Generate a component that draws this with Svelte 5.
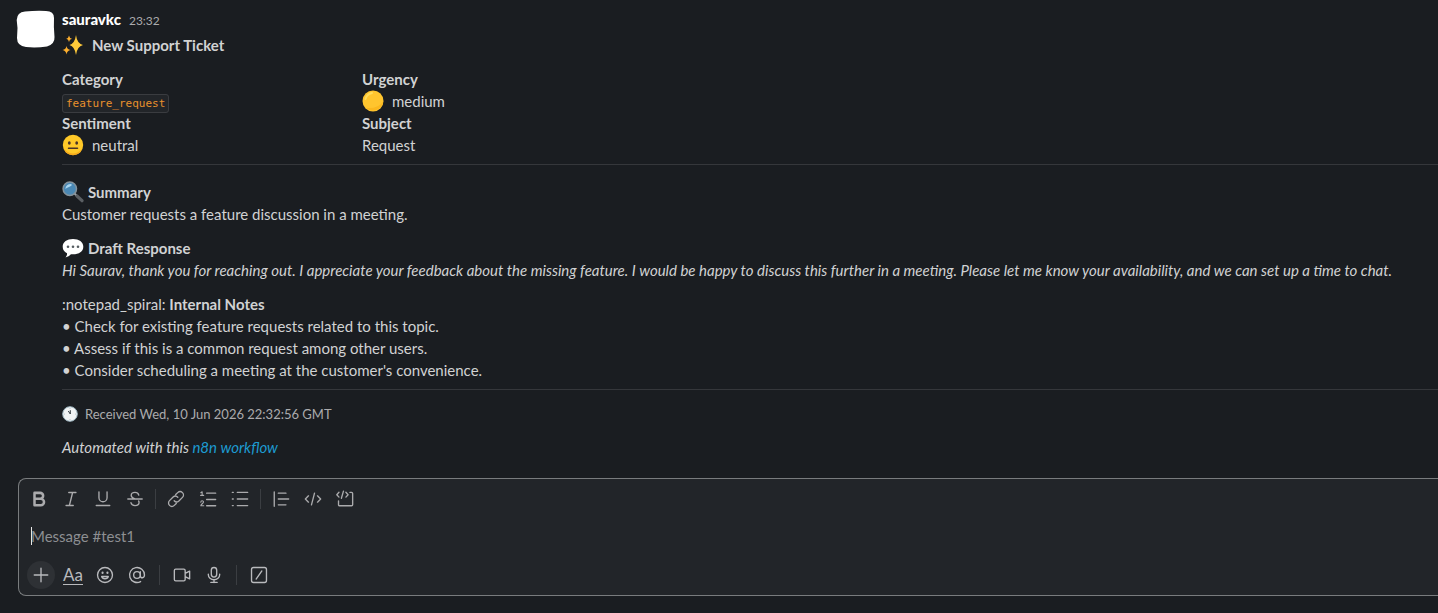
<script lang="ts">
  const notes = [
    'Check for existing feature requests related to this topic.',
    'Assess if this is a common request among other users.',
    "Consider scheduling a meeting at the customer's convenience."
  ];
  const formatGroups = [
    ['Bold', 'Italic', 'Underline', 'Strikethrough'],
    ['Link', 'Ordered list', 'Bulleted list'],
    ['Blockquote', 'Code', 'Code block']
  ];
  const actionGroups = [
    ['Attach', 'Formatting', 'Emoji', 'Mention'],
    ['Video clip', 'Audio clip'],
    ['Shortcuts']
  ];
  let draft = $state('');
</script>

{#snippet icon(name: string)}
  <svg class="icon" viewBox="0 0 20 20" aria-hidden="true">
    {#if name === 'Bold'}
      <path class="heavy" d="M5 3.200h6.300a3.300 3.300 0 0 1 0 6.600H5zM5 9.800h7a3.600 3.600 0 0 1 0 7.200H5z" />
    {:else if name === 'Italic'}
      <path d="M7.500 2.750h8M4.500 17.250h8M11.800 2.750l-3.600 14.500" />
    {:else if name === 'Underline'}
      <path d="M5.500 2v6.500a4.500 4.500 0 0 0 9 0V2M2.500 17.250h15" />
    {:else if name === 'Strikethrough'}
      <path d="M14.200 5.700C13.700 3.800 12.200 2.700 10 2.700c-2.500 0-4.200 1.300-4.200 3.400 0 1.900 1.500 2.900 4.200 3.700M2 10h16M14 12.200c.4.5.5 1 .5 1.600 0 2.200-1.800 3.500-4.500 3.500-2.400 0-4.100-1.200-4.500-3.200" />
    {:else if name === 'Link'}
      <path d="M8 12a3.700 3.700 0 0 0 5.200.2l4-4a3.700 3.700 0 0 0-5.300-5.300L9.700 5.100M12 8a3.700 3.700 0 0 0-5.200-.2l-4 4a3.700 3.700 0 0 0 5.300 5.300l2.200-2.200" />
    {:else if name === 'Ordered list'}
      <path d="M8.500 3.500H18.500M8.500 10.500H18.500M8.500 17.500H18.500" />
      <path class="thin" d="M2 3l1.500-1v4M1.800 6h3.400M2 13.500c0-2 3-2 3-.1 0 1.300-3 2.600-3 4.100h3.300" />
    {:else if name === 'Bulleted list'}
      <path d="M7 2.700h11.500M7 10h11.500M7 17.300h11.500M1.500 2.700h1M1.500 10h1M1.500 17.300h1" />
    {:else if name === 'Blockquote'}
      <path d="M2.500 2v16M7 3.500h8.500M7 10h11.500M7 16.500h8.500" />
    {:else if name === 'Code'}
      <path d="M5 6.500L1.500 10 5 13.500M15 6.500l3.500 3.500-3.500 3.500M11.700 3.500L8.300 16.500" />
    {:else if name === 'Code block'}
      <path d="M3.300 2.500L.9 5.200l2.400 2.700M11 2.500l2.400 2.700L11 7.900M8.300 1.200L6 9.200M15.500 2.700h1.800c.7 0 1.200.5 1.200 1.200v12.400c0 .7-.5 1.200-1.200 1.200H4c-.7 0-1.200-.5-1.200-1.200V12" />
    {:else if name === 'Attach'}
      <path d="M10 2.500v15M2.500 10h15" />
    {:else if name === 'Emoji'}
      <circle cx="10" cy="10" r="8.300" />
      <path d="M6.300 11.700c1 3.300 6.400 3.300 7.400 0z" />
      <ellipse class="solid" cx="7.300" cy="7.500" rx="1.200" ry="1.500" />
      <ellipse class="solid" cx="12.700" cy="7.500" rx="1.200" ry="1.500" />
    {:else if name === 'Mention'}
      <circle cx="10" cy="10" r="3.700" />
      <path d="M13.700 6.300v4.600c0 3.200 4.600 2.800 4.600-.9A8.300 8.300 0 1 0 14 17.300" />
    {:else if name === 'Video clip'}
      <path d="M3 3.500h9c.9 0 1.500.7 1.500 1.500v10c0 .9-.6 1.500-1.500 1.500H3c-.9 0-1.500-.6-1.500-1.500V5c0-.8.6-1.500 1.500-1.500zM13.500 8.300l5-2.600v8.600l-5-2.600" />
    {:else if name === 'Audio clip'}
      <rect x="7" y="1.700" width="6" height="10.600" rx="3" />
      <path d="M3.700 9v.7a6.300 5.600 0 0 0 12.600 0V9M10 15.300v3M6.500 18.200h7" />
    {:else}
      <rect x="1.700" y="1.700" width="16.600" height="16.600" rx="2.200" />
      <path d="M13.200 5.500l-6.400 9" />
    {/if}
  </svg>
{/snippet}

<main>
  <article class="message">
    <div class="avatar">
      <svg viewBox="0 0 40 40" role="img" aria-label="sauravkc">
        <path fill="#fff" d="M9 3.500Q20 2.500 30 3Q38 3 38 10Q37.500 19 38.500 29Q39 36 31 38.500Q20 40 10 39Q1 38 1 30L1.500 20L.7 12Q1 4 9 3.500Z" />
      </svg>
    </div>
    <div class="body">
      <header><b class="author">sauravkc</b><time>23:32</time></header>
      <h1 class="line wide">
        <svg class="emoji" viewBox="0 0 22 22" aria-hidden="true">
          <path fill="#ffca3a" d="M14 1Q15 9.500 21 11Q15 12.500 14 21Q12.800 12.500 7.500 11Q12.800 9.500 14 1Z" />
          <path fill="#ffb02e" d="M4.500 12Q5 15.500 8.500 16Q5 16.500 4.500 20.500Q4 16.500 .5 16Q4 15.500 4.500 12ZM7 1.500Q7.400 4.200 10 4.800Q7.400 5.300 7 8Q6.600 5.300 4.200 4.800Q6.600 4.200 7 1.500Z" />
        </svg>
        New Support Ticket
      </h1>

      <dl class="fields">
        <div><dt>Category</dt><dd><code>feature_request</code></dd></div>
        <div>
          <dt>Urgency</dt>
          <dd class="line wide">
            <svg class="emoji" viewBox="0 0 22 22" aria-hidden="true">
              <circle cx="11" cy="11" r="10.500" fill="#ffc52e" />
              <path d="M3.500 9Q5 4 10 3" fill="none" stroke="#ffdc5c" stroke-width="2" stroke-linecap="round" />
              <path d="M4 18Q11 23 18 18Q21 15 21.300 11Q17 19 4 18Z" fill="#fbb81f" />
            </svg>
            medium
          </dd>
        </div>
        <div>
          <dt>Sentiment</dt>
          <dd class="line wide">
            <svg class="emoji" viewBox="0 0 22 22" aria-hidden="true">
              <circle cx="11" cy="11" r="10.200" fill="#ffc928" />
              <path d="M2 15Q11 24 20 15Q18 21 11 21.200Q4 21 2 15Z" fill="#f5a91c" />
              <ellipse cx="7.300" cy="9" rx="1.400" ry="1.700" fill="#493329" />
              <ellipse cx="14.700" cy="9" rx="1.400" ry="1.700" fill="#493329" />
              <path d="M6.500 14.300h9" stroke="#493329" stroke-width="1.500" stroke-linecap="round" />
            </svg>
            neutral
          </dd>
        </div>
        <div><dt>Subject</dt><dd>Request</dd></div>
      </dl>

      <hr />

      <section>
        <h2 class="line">
          <svg class="emoji" viewBox="0 0 22 22" aria-hidden="true">
            <path d="M12.500 12.500l3 3" stroke="#9aa3a8" stroke-width="2" />
            <path d="M15 15l5 4.700" stroke="#5b5f63" stroke-width="3.200" stroke-linecap="round" />
            <circle cx="7.800" cy="7.800" r="6.700" fill="#4a88b4" stroke="#84929b" stroke-width="1.500" />
            <path d="M3.300 8Q4 3 9 3Q11 4 8 5.500Q4 7 3.300 8Z" fill="#a9d5ee" />
          </svg>
          Summary
        </h2>
        <p>Customer requests a feature discussion in a meeting.</p>
      </section>
      <section>
        <h2 class="line">
          <svg class="emoji" viewBox="0 0 22 22" aria-hidden="true">
            <path fill="#fff" d="M11 2C17 2 21.300 5 21.300 9.700S17 17.300 11 17.300L8.800 17.200Q7 20 3.500 20.500Q5.300 18.500 5 16.300Q.7 14 .7 9.700C.7 5 5 2 11 2Z" />
            <g fill="#555c61"><circle cx="6" cy="9.700" r="1.300" /><circle cx="11" cy="9.700" r="1.300" /><circle cx="16" cy="9.700" r="1.300" /></g>
          </svg>
          Draft Response
        </h2>
        <p><em>Hi Saurav, thank you for reaching out. I appreciate your feedback about the missing feature. I would be happy to discuss this further in a meeting. Please let me know your availability, and we can set up a time to chat.</em></p>
      </section>
      <section>
        <p>:notepad_spiral: <b>Internal Notes</b></p>
        {#each notes as note}
          <p>• {note}</p>
        {/each}
      </section>

      <hr />

      <p class="received line">
        <svg class="clock" viewBox="0 0 16 16" aria-hidden="true">
          <circle cx="8" cy="8" r="7.300" fill="#f1f4f5" stroke="#9fb7c2" />
          <path d="M8.300 8V4.200M8.300 8L6.300 5" fill="none" stroke="#333b40" stroke-width="1" />
          <g fill="#a9b4ba"><circle cx="8" cy="2.500" r=".5" /><circle cx="13.500" cy="8" r=".5" /><circle cx="8" cy="13.500" r=".5" /><circle cx="2.500" cy="8" r=".5" /></g>
        </svg>
        Received Wed, 10 Jun 2026 22:32:56 GMT
      </p>
      <p><em>Automated with this <a href="#workflow">n8n workflow</a></em></p>
    </div>
  </article>

  <form class="composer">
    <div class="toolbar format">
      {#each formatGroups as group}
        <div class="group">
          {#each group as name}
            <button type="button" aria-label={name}>{@render icon(name)}</button>
          {/each}
        </div>
      {/each}
    </div>
    <div class="entry">
      <span class="caret"></span>
      <input type="text" placeholder="Message #test1" aria-label="Message #test1" bind:value={draft} />
    </div>
    <div class="toolbar actions">
      {#each actionGroups as group}
        <div class="group">
          {#each group as name}
            <button type="button" class:round={name === 'Attach'} aria-label={name}>
              {#if name === 'Formatting'}<span class="aa">Aa</span>{:else}{@render icon(name)}{/if}
            </button>
          {/each}
        </div>
      {/each}
    </div>
  </form>
</main>

<style>
  :global(body) {
    margin: 0;
    background: #1a1d21;
    overflow-x: hidden;
  }
  main {
    padding: 8px 0 17px;
    color: #d1d2d3;
    font: 15px/22px Lato, sans-serif;
  }
  h1, h2, p, dl, dd {
    margin: 0;
    font-size: 15px;
    line-height: 22px;
  }
  h1, h2, b, dt { font-weight: 700; }
  .message {
    display: flex;
    gap: 6px;
    padding-left: 16px;
  }
  .avatar { width: 40px; flex: none; }
  .avatar svg { display: block; width: 40px; height: 40px; }
  .body { flex: 1; min-width: 0; }
  header {
    display: flex;
    align-items: baseline;
    gap: 8px;
    margin-bottom: 2px;
  }
  .author { color: #fff; font-weight: 900; }
  time { font-size: 12px; color: #ababad; }
  .line {
    display: flex;
    align-items: center;
    gap: 4px;
    height: 22px;
  }
  .wide { gap: 8px; }
  .emoji { width: 22px; height: 22px; flex: none; }
  .clock { width: 16px; height: 16px; flex: none; }
  .fields {
    display: grid;
    grid-template-columns: 300px 300px;
    margin-top: 12px;
  }
  dd { height: 22px; }
  code {
    padding: 2px 3px;
    border: 1px solid #3a3c40;
    border-radius: 3px;
    background: #222529;
    color: #e8912d;
    font: 11px/16px "DejaVu Sans Mono", monospace;
  }
  hr {
    height: 1px;
    margin: 8px 0 16px;
    border: 0;
    background: #35373b;
  }
  section + section { margin-top: 12px; }
  section + hr { margin: 8px 0 13px; }
  .received {
    gap: 7px;
    margin-bottom: 11px;
    color: #ababad;
    font-size: 13px;
  }
  a { color: #1d9bd1; text-decoration: none; }

  .composer {
    margin: 20px 0 0 18px;
    border: 1px solid #797c7e;
    border-right: 0;
    border-radius: 8px 0 0 8px;
    background: #222529;
  }
  .toolbar { display: flex; }
  .format { padding: 6px 6px 0; }
  .actions { padding: 0 8px 6px; }
  .group { display: flex; gap: 4px; }
  .group + .group::before {
    content: "";
    width: 1px;
    height: 20px;
    align-self: center;
    background: #3b3e42;
  }
  .format .group + .group { margin-left: 6px; }
  .format .group + .group::before { margin-right: 2px; }
  .actions .group + .group { margin-left: 8px; }
  .actions .group + .group::before { margin-right: 4px; }
  button {
    display: flex;
    align-items: center;
    justify-content: center;
    width: 28px;
    height: 28px;
    padding: 0;
    border: 0;
    border-radius: 4px;
    background: none;
    color: #ababad;
  }
  .actions button { color: #b9babd; }
  button.round { border-radius: 50%; background: #2e3135; }
  .icon {
    width: 18px;
    height: 18px;
    fill: none;
    stroke: currentColor;
    stroke-width: 1.5;
    stroke-linecap: round;
    stroke-linejoin: round;
  }
  .icon .heavy { stroke-width: 2.8; }
  .icon .thin { stroke-width: 1.2; }
  .icon .solid { fill: currentColor; stroke: none; }
  .aa {
    border-bottom: 1px solid currentColor;
    font: 17px/18px Lato, sans-serif;
  }
  .entry {
    display: flex;
    align-items: center;
    padding: 11px 12px 13px;
  }
  .caret { width: 1px; height: 18px; margin-right: -1px; background: #e8e8e8; }
  input {
    flex: 1;
    min-width: 0;
    height: 24px;
    padding: 0;
    border: 0;
    outline: 0;
    background: none;
    color: #d1d2d3;
    font: 15px/22px Lato, sans-serif;
  }
  input::placeholder { color: #8d8f92; opacity: 1; }
</style>
